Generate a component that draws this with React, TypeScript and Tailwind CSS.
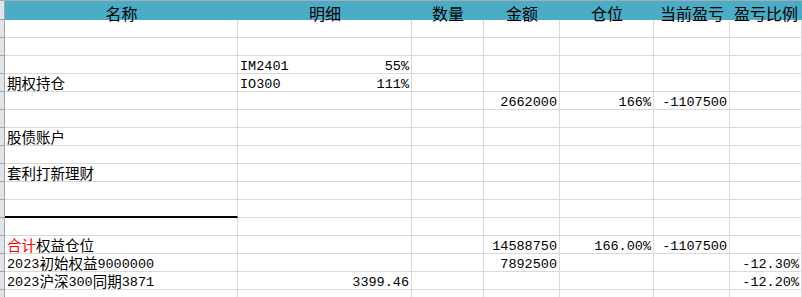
import type { ReactNode } from 'react';

type Row = {
  a?: ReactNode;
  b?: [string, string];
  bRight?: string;
  d?: string;
  e?: string;
  f?: string;
  g?: string;
  underline?: boolean;
};

// 中文字符稍大一些，数字用等宽字体
function Mixed({ text }: { text: string }) {
  const parts = text.split(/([\u4e00-\u9fff]+)/).filter(Boolean);
  return (
    <>
      {parts.map((p, i) =>
        /[\u4e00-\u9fff]/.test(p) ? (
          <span key={i} className="text-[14.5px]">
            {p}
          </span>
        ) : (
          <span key={i}>{p}</span>
        )
      )}
    </>
  );
}

const rows: Row[] = [
  {},
  {},
  { b: ['IM2401', '55%'] },
  { a: <Mixed text="期权持仓" />, b: ['IO300', '111%'] },
  { d: '2662000', e: '166%', f: '-1107500' },
  {},
  { a: <Mixed text="股债账户" /> },
  {},
  { a: <Mixed text="套利打新理财" /> },
  {},
  { underline: true },
  {},
  {
    a: (
      <>
        <span className="text-[14.5px] text-[#ff0000]">合计</span>
        <Mixed text="权益仓位" />
      </>
    ),
    d: '14588750',
    e: '166.00%',
    f: '-1107500',
  },
  { a: <Mixed text="2023初始权益9000000" />, d: '7892500', g: '-12.30%' },
  { a: <Mixed text="2023沪深300同期3871" />, bRight: '3399.46', g: '-12.20%' },
  {},
];

const headers = ['名称', '明细', '数量', '金额', '仓位', '当前盈亏', '盈亏比例'];

const gridCols = 'grid grid-cols-[5px_233px_174px_72px_76px_94px_76px_72px]';
const cell = 'flex items-end border-r border-b border-[#d9d9d9] leading-[12px] whitespace-nowrap';
const num = `${cell} justify-end pr-[2px]`;

export default function App() {
  return (
    <div
      className="w-[802px] h-[297px] overflow-hidden bg-white text-[13.5px] text-black"
      style={{ fontFamily: '"Liberation Mono", "Noto Sans CJK SC", monospace' }}
    >
      {/* 表头 */}
      <div className={`${gridCols} h-[20px] border-t border-[#a8abb0]`}>
        <div className="bg-[#e1e4e8] border-r border-b border-[#a0a5ab]" />
        {headers.map((h) => (
          <div
            key={h}
            className="flex items-end justify-center bg-[#4bacc6] text-[16px] leading-[14px] text-black"
            style={{ fontFamily: '"Noto Sans CJK SC", sans-serif' }}
          >
            {h}
          </div>
        ))}
      </div>

      {/* 数据行 */}
      {rows.map((r, i) => (
        <div key={i} className={`${gridCols} h-[18px]`}>
          <div className="bg-[#e1e4e8] border-r border-b border-[#a0a5ab]" />
          <div className={`${cell} pl-[2px] ${r.underline ? 'border-b-2 border-b-black' : ''}`}>{r.a}</div>
          <div className={`${cell} justify-between px-[2px]`}>
            {r.b ? (
              <>
                <span>{r.b[0]}</span>
                <span>{r.b[1]}</span>
              </>
            ) : r.bRight ? (
              <span className="ml-auto">{r.bRight}</span>
            ) : null}
          </div>
          <div className={num} />
          <div className={num}>{r.d}</div>
          <div className={num}>{r.e}</div>
          <div className={num}>{r.f}</div>
          <div className={num}>{r.g}</div>
        </div>
      ))}
    </div>
  );
}
